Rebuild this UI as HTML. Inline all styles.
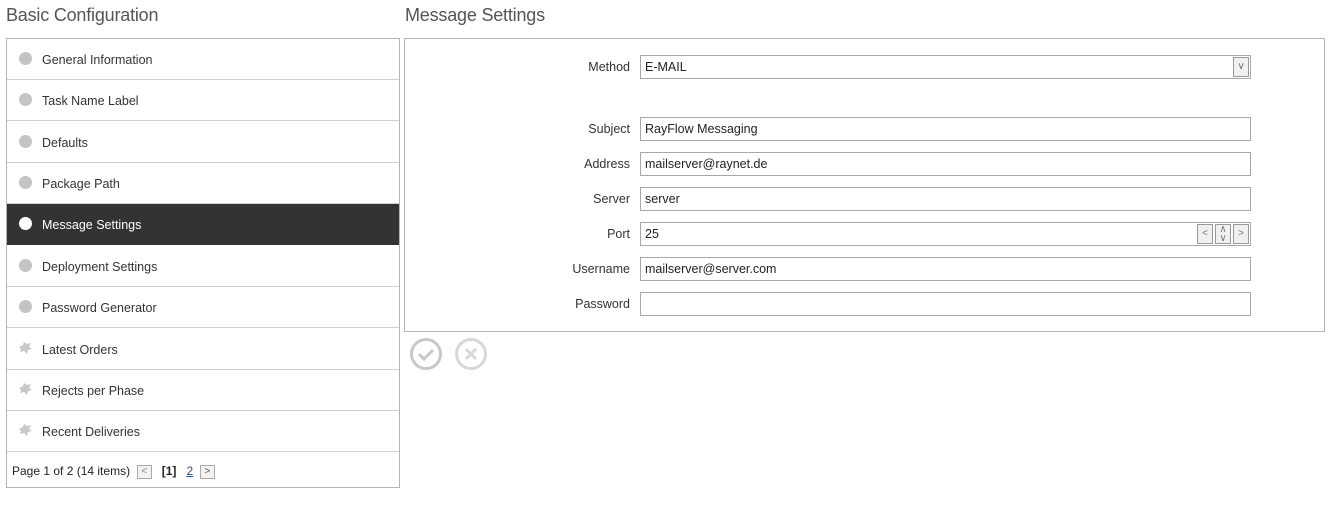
<!DOCTYPE html>
<html><head><meta charset="utf-8"><style>
*{box-sizing:border-box;margin:0;padding:0}
body{width:1343px;height:530px;background:#fff;font-family:"Liberation Sans",sans-serif;color:#333;position:relative;overflow:hidden}
.t{position:absolute;font-size:18px;color:#555;top:5px;letter-spacing:-0.2px}
.lp{position:absolute;left:6px;top:38px;width:394px;height:450px;border:1px solid #b5b5b5}
.row{position:absolute;left:0;width:392px;height:41px;border-bottom:1px solid #d0d0d0;font-size:12.5px;line-height:42px;padding-left:35px;color:#333}
.row.sel{background:#333;color:#fff;border-bottom-color:#333}
.dot{position:absolute;left:12px;top:13px;width:13px;height:13px;border-radius:50%;background:#c4c4c4}
.sel .dot{background:#fff}
.pz{position:absolute;left:10px;top:12px}
.ft{position:absolute;left:5px;top:424px;font-size:12px;color:#222;line-height:16px}
.pb{display:inline-block;width:15px;height:14px;border:1px solid #aaa;background:#f2f2f2;vertical-align:middle;font-size:10px;line-height:12px;text-align:center;color:#888}
.rp{position:absolute;left:404px;top:38px;width:921px;height:294px;border:1px solid #b5b5b5}
.lb{position:absolute;right:713px;width:100px;text-align:right;font-size:12.5px;color:#333}
.in{position:absolute;left:640px;width:611px;height:24px;border:1px solid #a8a8a8;font-size:12.5px;line-height:23px;padding-left:4px;color:#222}
.bt{position:absolute;width:16px;height:20px;top:1px;border:1px solid #999;background:#f0f0f0;font-size:10px;color:#777;text-align:center;line-height:18px}
</style></head><body>
<div class="t" style="left:6px">Basic Configuration</div>
<div class="t" style="left:405px">Message Settings</div>
<div class="lp">
<div class="row" style="top:0"><span class="dot"></span>General Information</div>
<div class="row" style="top:41px"><span class="dot"></span>Task Name Label</div>
<div class="row" style="top:83px"><span class="dot"></span>Defaults</div>
<div class="row" style="top:124px"><span class="dot"></span>Package Path</div>
<div class="row sel" style="top:165px"><span class="dot"></span>Message Settings</div>
<div class="row" style="top:207px"><span class="dot"></span>Deployment Settings</div>
<div class="row" style="top:248px"><span class="dot"></span>Password Generator</div>
<div class="row" style="top:290px"><svg class="pz" width="16" height="14" viewBox="0 0 16 14"><path d="M2 6l4-2 1-3 3 2 4-1-2 4 3 2-4 1-1 4-3-3-4 1 1-3z" fill="#c8c8c8"/></svg>Latest Orders</div>
<div class="row" style="top:331px"><svg class="pz" width="16" height="14" viewBox="0 0 16 14"><path d="M2 6l4-2 1-3 3 2 4-1-2 4 3 2-4 1-1 4-3-3-4 1 1-3z" fill="#c8c8c8"/></svg>Rejects per Phase</div>
<div class="row" style="top:372px"><svg class="pz" width="16" height="14" viewBox="0 0 16 14"><path d="M2 6l4-2 1-3 3 2 4-1-2 4 3 2-4 1-1 4-3-3-4 1 1-3z" fill="#c8c8c8"/></svg>Recent Deliveries</div>
<div class="ft">Page 1 of 2 (14 items) &nbsp;<span class="pb">&lt;</span>&nbsp;&nbsp; <b>[1]</b> &nbsp; <span style="color:#2a4ab0;text-decoration:underline">2</span> &nbsp;<span class="pb" style="color:#555">&gt;</span></div>
</div>
<div class="rp"></div>
<div class="lb" style="top:60px">Method</div>
<div class="in" style="top:55px">E-MAIL<span class="bt" style="right:1px">&#8744;</span></div>
<div class="lb" style="top:122px">Subject</div><div class="in" style="top:117px">RayFlow Messaging</div>
<div class="lb" style="top:157px">Address</div><div class="in" style="top:152px">mailserver@raynet.de</div>
<div class="lb" style="top:192px">Server</div><div class="in" style="top:187px">server</div>
<div class="lb" style="top:227px">Port</div><div class="in" style="top:222px">25<span class="bt" style="right:37px">&lt;</span><span class="bt" style="right:19px;line-height:9px">&#8743;<br>&#8744;</span><span class="bt" style="right:1px">&gt;</span></div>
<div class="lb" style="top:262px">Username</div><div class="in" style="top:257px">mailserver@server.com</div>
<div class="lb" style="top:297px">Password</div><div class="in" style="top:292px"></div>
<svg style="position:absolute;left:409px;top:337px" width="34" height="34" viewBox="0 0 34 34"><circle cx="17" cy="17" r="14.5" fill="none" stroke="#c8c8c8" stroke-width="3"/><path d="M10 17l5 5 9-9" fill="none" stroke="#c8c8c8" stroke-width="3"/></svg>
<svg style="position:absolute;left:454px;top:337px" width="34" height="34" viewBox="0 0 34 34"><circle cx="17" cy="17" r="14.5" fill="none" stroke="#d8d8d8" stroke-width="3"/><path d="M12 12l10 10M22 12l-10 10" fill="none" stroke="#d8d8d8" stroke-width="3"/></svg>
</body></html>
